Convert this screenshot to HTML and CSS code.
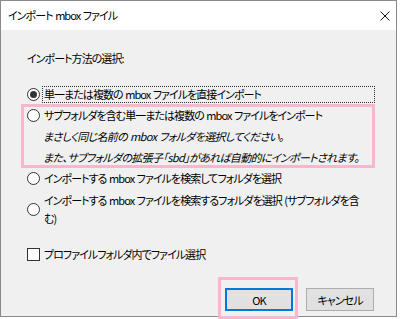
FILE: index.html
```html
<!DOCTYPE html>
<html lang="ja">
<head>
<meta charset="utf-8">
<link rel="stylesheet" href="styles.css">
</head>
<body>
<div class="window">
  <div class="titlebar">
    <span class="title">インポート mbox ファイル</span>
    <svg class="close" width="10" height="10" viewBox="0 0 10 10"><path d="M0.5 0.5L9.5 9.5M9.5 0.5L0.5 9.5" stroke="#111" stroke-width="1" fill="none"/></svg>
  </div>
  <div class="content">
    <div class="group-label">インポート方法の選択:</div>
    <div class="option first">
      <span class="radio checked"></span>
      <span class="label focus">単一または複数の mbox ファイルを直接インポート</span>
    </div>
    <div class="highlight">
      <div class="option inner">
        <span class="radio"></span>
        <span class="label">サブフォルダを含む単一または複数の mbox ファイルをインポート</span>
      </div>
      <div class="note">まさしく同じ名前の mbox フォルダを選択してください。</div>
      <div class="note">また、サブフォルダの拡張子「sbd」があれば自動的にインポートされます。</div>
    </div>
    <div class="option after-hl">
      <span class="radio"></span>
      <span class="label">インポートする mbox ファイルを検索してフォルダを選択</span>
    </div>
    <div class="option two-line">
      <span class="radio"></span>
      <span class="label">インポートする mbox ファイルを検索するフォルダを選択 (サブフォルダを含<br>む)</span>
    </div>
    <div class="option check-row">
      <span class="checkbox"></span>
      <span class="label">プロファイルフォルダ内でファイル選択</span>
    </div>
  </div>
  <div class="buttons">
    <button class="btn default">OK</button>
    <button class="btn">キャンセル</button>
  </div>
  <div class="ok-mark"></div>
</div>
</body>
</html>
```
FILE: styles.css
```css
html, body {
  margin: 0;
  padding: 0;
  background: #ffffff;
}
body {
  width: 400px;
  height: 319px;
  overflow: hidden;
  font-family: "Noto Sans CJK JP", "Noto Sans", sans-serif;
  font-size: 11px;
  letter-spacing: -0.95px;
  word-spacing: 1px;
  font-feature-settings: "palt";
  color: #000;
}
.window {
  position: relative;
  width: 395px;
  height: 315px;
  border: 1px solid #8a8a8a;
  background: #f0f0f0;
}
.titlebar {
  height: 29px;
  background: #ffffff;
  display: flex;
  align-items: center;
  justify-content: space-between;
  padding: 0 6px 0 7px;
}
.title {
  line-height: 16px;
  margin-top: -1px;
  white-space: nowrap;
}
.close {
  display: block;
}
.content {
  padding: 0 21px 0 20px;
}
.group-label {
  margin-top: 20px;
  margin-left: 6px;
  line-height: 16px;
  height: 16px;
  white-space: nowrap;
}
.option {
  display: flex;
  align-items: center;
  padding-left: 6px;
  line-height: 16px;
  white-space: nowrap;
}
.option.first {
  margin-top: 20px;
}
.radio {
  flex: none;
  width: 11px;
  height: 11px;
  border: 1px solid #333;
  border-radius: 50%;
  background: #fff;
  position: relative;
  margin-right: 1px;
}
.radio.checked::after {
  content: "";
  position: absolute;
  left: 2px;
  top: 2px;
  width: 7px;
  height: 7px;
  border-radius: 50%;
  background: #333;
}
.checkbox {
  flex: none;
  width: 11px;
  height: 11px;
  border: 1px solid #333;
  background: #fff;
  margin-right: 1px;
}
.label {
  padding-left: 3px;
}
.label.focus {
  flex: 1;
  border: 1px dotted #333;
  padding-left: 1px;
  margin-left: 1px;
  line-height: 15px;
}
.highlight {
  margin-top: 1px;
  border: 3px solid #f5b8cc;
  height: 58px;
}
.option.inner {
  padding-left: 3px;
  height: 16px;
}
.note {
  font-style: italic;
  letter-spacing: -0.65px;
  line-height: 16px;
  margin-top: 5px;
  padding-left: 19px;
  white-space: nowrap;
}
.option.after-hl {
  margin-top: 2px;
}
.option.two-line {
  margin-top: 5px;
  line-height: 18px;
}
.option.check-row {
  margin-top: 19px;
}
.buttons {
  display: flex;
  justify-content: flex-end;
  gap: 13px;
  padding-right: 22px;
  margin-top: 26px;
}
.btn {
  width: 68px;
  height: 23px;
  font-family: inherit;
  font-size: 11px;
  letter-spacing: -0.95px;
  font-feature-settings: "palt";
  background: #e1e1e1;
  border: 1px solid #adadad;
  color: #000;
  padding: 0;
  margin: 0;
}
.btn.default {
  border: 2px solid #0078d7;
}
.ok-mark {
  position: absolute;
  left: 217px;
  top: 276px;
  width: 74px;
  height: 36px;
  border: 3px solid #f5b8cc;
}
```
